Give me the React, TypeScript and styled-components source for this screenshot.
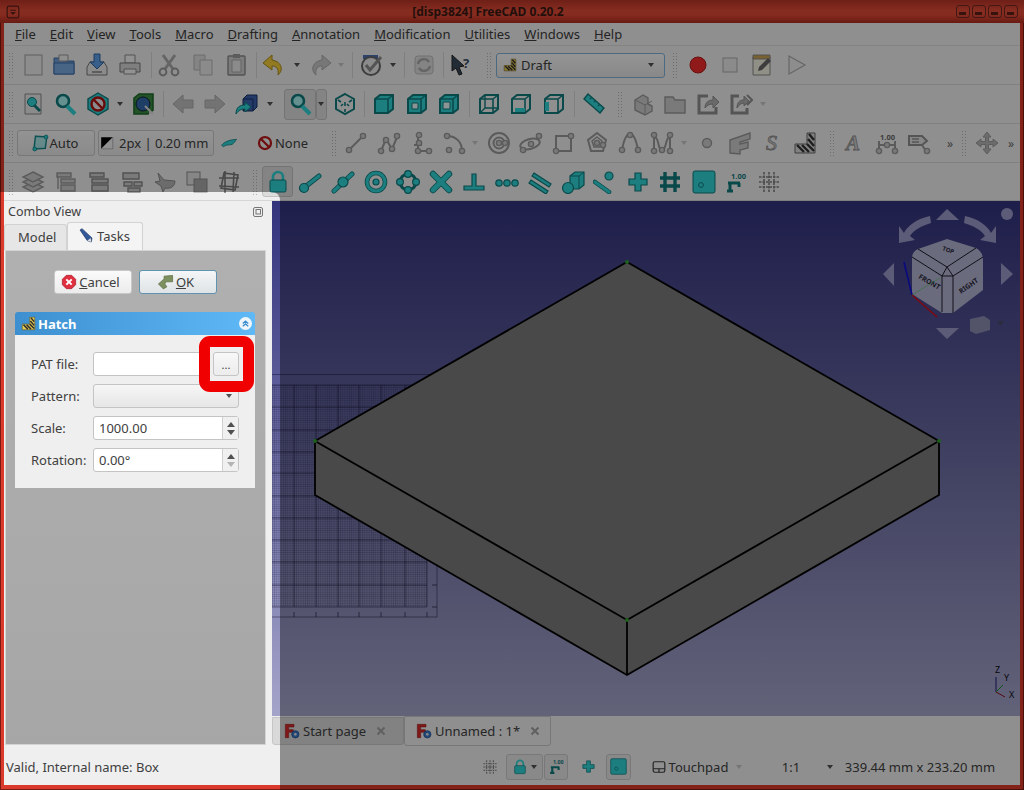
import type { ReactNode } from 'react';
import styled, { createGlobalStyle } from 'styled-components';

const GlobalStyle = createGlobalStyle`
  html, body {
    margin: 0;
    width: 1024px;
    height: 790px;
    overflow: hidden;
    background: #efefef;
  }
  body {
    font-family: "Noto Sans", "Open Sans", sans-serif;
    font-size: 13px;
    color: #404040;
  }
`;

const Window = styled.div`
  position: relative;
  width: 1024px;
  height: 790px;
  overflow: hidden;
  display: flex;
  flex-direction: column;
  background: #d93a2b;
  box-shadow: inset 0 0 0 1px #7a1a12;
`;

const Spotlight = styled.div`
  position: absolute;
  left: 0;
  top: 192px;
  width: 280px;
  height: 598px;
  border-top-right-radius: 8px;
  box-shadow: 0 0 0 1300px rgba(0, 0, 0, 0.4);
  pointer-events: none;
`;

const TitleBar = styled.div`
  height: 23px;
  flex: none;
  display: flex;
  align-items: center;
  justify-content: space-between;
  padding: 0 6px;
  background: linear-gradient(#b83527 0%, #e04a36 45%, #e04835 65%, #ad2d20 100%);
`;

const TitleText = styled.div`
  font-size: 12px;
  font-weight: 700;
  color: #3a1a14;
`;

const WinButtons = styled.div`
  display: flex;
  gap: 2px;
`;

const WinButton = styled.div`
  width: 14px;
  height: 13px;
  border: 1px solid #6d2a22;
  border-radius: 3px;
  display: flex;
  align-items: flex-end;
  justify-content: center;
  padding-bottom: 2px;
  box-sizing: border-box;
  &::after {
    content: '';
    width: 7px;
    height: 3px;
    background: #5a2018;
  }
`;

const Shell = styled.div`
  flex: 1;
  min-height: 0;
  margin: 0 4px 5px;
  display: flex;
  flex-direction: column;
  background: #efefef;
`;

const MenuBar = styled.div`
  height: 23px;
  flex: none;
  display: flex;
  align-items: center;
  gap: 14px;
  padding-left: 11px;
  border-bottom: 1px solid #dcdcdc;
  box-sizing: border-box;
`;

const MenuItem = styled.span`
  font-size: 13px;
  color: #3c3c3c;
`;

const ToolRow = styled.div<{ $h: number }>`
  height: ${(p) => p.$h}px;
  flex: none;
  display: flex;
  align-items: center;
  border-bottom: 1px solid #d6d6d6;
  box-sizing: border-box;
`;

const Slot = styled.div<{ $w: number; $ml: number }>`
  width: ${(p) => p.$w}px;
  margin-left: ${(p) => p.$ml}px;
  flex: none;
  display: flex;
  align-items: center;
  justify-content: center;
  color: #404040;
`;

const Sep = styled.div`
  width: 1px;
  height: 26px;
  background: #d4d4d4;
`;

const Grip = styled.div`
  width: 6px;
  height: 26px;
  background-image: radial-gradient(circle, #b5b5b5 0.8px, transparent 1px);
  background-size: 3px 3px;
`;

const Drop = styled.div<{ $off?: boolean }>`
  width: 0;
  height: 0;
  border-left: 3.5px solid transparent;
  border-right: 3.5px solid transparent;
  border-top: 4px solid ${(p) => (p.$off ? '#c4c4c4' : '#505050')};
`;

const Combo = styled.div`
  width: 100%;
  height: 25px;
  box-sizing: border-box;
  display: flex;
  align-items: center;
  gap: 4px;
  padding: 0 6px;
  border: 1px solid #7fb0d4;
  border-radius: 3px;
  background: linear-gradient(#f7f7f7, #e4e4e4);
  font-size: 13px;
  & > :last-child {
    margin-left: auto;
    margin-right: 4px;
  }
`;

const FlatButton = styled.div`
  width: 100%;
  height: 26px;
  box-sizing: border-box;
  display: flex;
  align-items: center;
  justify-content: center;
  gap: 1px;
  padding-right: 3px;
  border: 1px solid #c6c6c6;
  border-radius: 3px;
  background: linear-gradient(#f5f5f5, #e7e7e7);
  font-size: 13px;
  white-space: nowrap;
`;

const Pressed = styled.div`
  width: 100%;
  height: 31px;
  box-sizing: border-box;
  display: flex;
  align-items: center;
  justify-content: center;
  border: 1px solid #c2c2c2;
  border-radius: 3px;
  background: #dcdcdc;
`;

const PlainLabel = styled.div`
  display: flex;
  align-items: center;
  gap: 1px;
  font-size: 13px;
  white-space: nowrap;
`;

const More = styled.span`
  font-size: 12px;
  color: #666;
`;

const Main = styled.div`
  height: 549px;
  flex: none;
  display: flex;
`;

const Dock = styled.div`
  width: 268px;
  flex: none;
  display: flex;
  flex-direction: column;
  background: #efefef;
`;

const DockHead = styled.div`
  height: 21px;
  flex: none;
  display: flex;
  align-items: center;
  justify-content: space-between;
  padding: 0 8px 0 4px;
  font-size: 12.5px;
`;

const TabRow = styled.div`
  height: 28px;
  flex: none;
  display: flex;
  align-items: flex-end;
`;

const DockTab = styled.div<{ $on?: boolean }>`
  box-sizing: border-box;
  height: ${(p) => (p.$on ? 28 : 26)}px;
  width: ${(p) => (p.$on ? 76 : 63)}px;
  padding: 0 0 2px ${(p) => (p.$on ? 10 : 13)}px;
  display: flex;
  align-items: center;
  gap: 3px;
  background: ${(p) => (p.$on ? '#f4f4f4' : '#e6e6e6')};
  border: 1px solid #d2d2d2;
  border-bottom: none;
  border-radius: 3px 3px 0 0;
  font-size: 13px;
`;

const TaskPanel = styled.div`
  height: 495px;
  width: 261px;
  margin-left: 1px;
  flex: none;
  box-sizing: border-box;
  border: 1px solid #d4d4d4;
  background: linear-gradient(#b0b0b0, #a6a6a6);
  padding-top: 19px;
`;

const DialogButtons = styled.div`
  display: flex;
  justify-content: center;
  gap: 7px;
  margin-left: -1px;
`;

const DialogButton = styled.div<{ $focus?: boolean }>`
  width: 78px;
  height: 24px;
  box-sizing: border-box;
  display: flex;
  align-items: center;
  justify-content: center;
  gap: 2px;
  padding-right: 4px;
  font-size: 13px;
  border: 1px solid ${(p) => (p.$focus ? '#5f93b0' : '#c8c8c8')};
  border-radius: 3px;
  background: ${(p) => (p.$focus ? 'linear-gradient(#f4f6f7, #dfe3e5)' : 'linear-gradient(#fafafa, #ececec)')};
`;

const Section = styled.div`
  margin: 18px 10px 0 9px;
`;

const SectionHead = styled.div`
  height: 23px;
  display: flex;
  align-items: center;
  gap: 2px;
  padding: 0 3px 0 6px;
  border-radius: 3px 3px 0 0;
  background: linear-gradient(90deg, #3d8fcf, #5fb9f6);
  color: #fff;
  font-weight: 700;
  font-size: 13px;
`;

const Collapse = styled.div`
  margin-left: auto;
  width: 13px;
  height: 13px;
  border-radius: 50%;
  background: #eef6fb;
  display: flex;
  align-items: center;
  justify-content: center;
`;

const SectionBody = styled.div`
  position: relative;
  height: 153px;
  box-sizing: border-box;
  padding: 17px 16px 0;
  background: #efefef;
  display: grid;
  grid-template-columns: 62px 146px;
  grid-auto-rows: 24px;
  row-gap: 8px;
  align-items: center;
  font-size: 13px;
`;

const FieldRow = styled.div`
  display: flex;
  height: 24px;
  gap: 3px;
`;

const TextField = styled.div`
  flex: 1;
  box-sizing: border-box;
  height: 24px;
  display: flex;
  align-items: center;
  padding-left: 5px;
  background: #fff;
  border: 1px solid #c4c4c4;
  border-radius: 3px;
`;

const Browse = styled.div`
  width: 26px;
  height: 24px;
  box-sizing: border-box;
  display: flex;
  align-items: flex-end;
  justify-content: center;
  padding-bottom: 4px;
  line-height: 12px;
  font-size: 11px;
  border: 1px solid #c4c4c4;
  border-radius: 3px;
  background: linear-gradient(#f8f8f8, #ececec);
`;

const SelectField = styled.div`
  box-sizing: border-box;
  height: 24px;
  display: flex;
  align-items: center;
  justify-content: flex-end;
  padding-right: 6px;
  border: 1px solid #c4c4c4;
  border-radius: 3px;
  background: linear-gradient(#f6f6f6, #e6e6e6);
`;

const SpinField = styled.div`
  box-sizing: border-box;
  height: 24px;
  display: flex;
  align-items: center;
  padding-left: 5px;
  background: #fff;
  border: 1px solid #c4c4c4;
  border-radius: 3px;
`;

const SpinArrows = styled.div`
  margin-left: auto;
  width: 15px;
  height: 100%;
  display: flex;
  flex-direction: column;
  align-items: center;
  justify-content: center;
  gap: 3px;
  border-left: 1px solid #d0d0d0;
  background: #f0f0f0;
`;

const SpinUp = styled.div`
  width: 0;
  height: 0;
  border-left: 4px solid transparent;
  border-right: 4px solid transparent;
  border-bottom: 5px solid #505050;
`;

const SpinDown = styled.div<{ $off?: boolean }>`
  width: 0;
  height: 0;
  border-left: 4px solid transparent;
  border-right: 4px solid transparent;
  border-top: 5px solid ${(p) => (p.$off ? '#b4b4b4' : '#505050')};
`;

const RedRing = styled.div`
  position: absolute;
  left: 184px;
  top: 1px;
  width: 55px;
  height: 56px;
  box-sizing: border-box;
  border: 11px solid #f00000;
  border-radius: 11px;
`;

const Center = styled.div`
  flex: 1;
  min-width: 0;
  display: flex;
  flex-direction: column;
`;

const ViewPort = styled.div`
  height: 515px;
  flex: none;
  background: linear-gradient(#33337d, #a4a4ca);
  & > svg {
    display: block;
  }
`;

const DocTabs = styled.div`
  height: 34px;
  flex: none;
  display: flex;
  align-items: flex-start;
`;

const DocTab = styled.div<{ $on?: boolean }>`
  box-sizing: border-box;
  width: ${(p) => (p.$on ? 147 : 132)}px;
  height: ${(p) => (p.$on ? 30 : 28)}px;
  margin-top: ${(p) => (p.$on ? 0 : 1)}px;
  display: flex;
  align-items: center;
  gap: 3px;
  padding-left: 11px;
  font-size: 13px;
  background: ${(p) => (p.$on ? '#efefef' : '#d9d9d9')};
  border: 1px solid #c6c6c6;
  border-radius: 0 0 3px 3px;
`;

const CloseMark = styled.span<{ $ml: number }>`
  margin-left: ${(p) => p.$ml}px;
  display: flex;
`;

const StatusBar = styled.div`
  flex: 1;
  min-height: 0;
  display: flex;
  align-items: center;
  padding: 0 0 2px 2px;
  font-size: 13px;
`;

const StatusText = styled.div`
  width: 470px;
`;

const StatusItem = styled.div<{ $w: number; $ml: number; $box?: boolean }>`
  width: ${(p) => p.$w}px;
  margin-left: ${(p) => p.$ml}px;
  height: 26px;
  flex: none;
  box-sizing: border-box;
  display: flex;
  align-items: center;
  justify-content: center;
  gap: 3px;
  white-space: nowrap;
  ${(p) => p.$box && 'border: 1px solid #c8c8c8; border-radius: 3px; background: #e4e4e4;'}
`;

const Ico = styled.svg<{ $s: number }>`
  width: ${(p) => p.$s}px;
  height: ${(p) => p.$s}px;
  flex: none;
`;

const T = '#2fd2d4';
const TD = '#127a7c';
const GF = '#cccccc';
const GS = '#989898';

const grey = { fill: GF, stroke: GS, strokeWidth: 1.4 };
const teal = { fill: T, stroke: TD, strokeWidth: 1.2 };
const wire = { fill: 'none', stroke: GS, strokeWidth: 2 };

const node = (x: number, y: number, k: number) => <circle key={k} cx={x} cy={y} r={2.6} {...grey} />;
const nodes = (pts: number[][]) => pts.map((p, i) => node(p[0], p[1], i));

const cubeBase = 'M3 7l5-4h13v14l-5 4H3z';
const cube = (filled: boolean, inner: ReactNode) => (
  <>
    <path d={cubeBase} fill={filled ? T : 'none'} stroke={TD} strokeWidth={2} />
    <path d="M3 7h13v14M16 7l5-4" fill="none" stroke={TD} strokeWidth={1.6} />
    {inner}
  </>
);

const icons: Record<string, ReactNode> = {
  menu: (
    <>
      <rect x="2" y="2" width="20" height="20" rx="3" fill="none" stroke="#5a2018" strokeWidth="2" />
      <path d="M7 8h10v2H7zM7 12h10l-5 5z" fill="#5a2018" />
    </>
  ),
  new: <rect x="4" y="2" width="17" height="20" fill="#ececec" stroke="#aaa" strokeWidth="1.2" />,
  open: (
    <>
      <path d="M2 5h9l2 3h9v13H2z" fill="#6f9fd8" stroke="#3c6aa5" />
      <path d="M7 2h9v6H7z" fill="#eee" stroke="#999" />
      <path d="M2 10h20v11H2z" fill="#7aa8e0" stroke="#3c6aa5" />
    </>
  ),
  save: (
    <>
      <path d="M2 14l3-5h14l3 5v8H2z" fill="#e8e8e8" stroke="#777" />
      <path d="M9 1h6v8h4l-7 7-7-7h4z" fill="#5c9ee6" stroke="#2f629c" />
      <path d="M7 18h10v2H7z" fill="#999" />
    </>
  ),
  print: (
    <>
      <path d="M7 2h10v8H7z" fill="#f4f4f4" stroke="#888" />
      <path d="M2 10h20v9H2z" fill="#d4d4d4" stroke="#777" />
      <path d="M6 16h12v5H6z" fill="#f4f4f4" stroke="#888" />
    </>
  ),
  cut: (
    <>
      <path d="M6 2l10 14M18 2L8 16" stroke="#a8a8a8" strokeWidth="3" fill="none" />
      <circle cx="6" cy="19" r="3.4" fill="none" stroke="#999" strokeWidth="2" />
      <circle cx="18" cy="19" r="3.4" fill="none" stroke="#999" strokeWidth="2" />
    </>
  ),
  copy: (
    <>
      <path d="M3 2h11v15H3z" fill="#dcdcdc" stroke="#b4b4b4" />
      <path d="M9 7h12v15H9z" fill="#e8e8e8" stroke="#b4b4b4" />
    </>
  ),
  paste: (
    <>
      <rect x="4" y="3" width="17" height="19" rx="1" fill="#cfcfcf" stroke="#8a8a8a" strokeWidth="1.4" />
      <path d="M8 7h9v12H8z" fill="#e8e8e8" stroke="#aaa" />
      <path d="M9 1h7v4H9z" fill="#999" />
    </>
  ),
  undo: <path d="M11 2L2 10l9 7v-4c4 0 7 2 6 9 5-4 5-13-6-15z" fill="#f2cc3a" stroke="#a88a1a" />,
  redo: <path d="M13 2l9 8-9 7v-4c-4 0-7 2-6 9-5-4-5-13 6-15z" fill="#c6c6c6" stroke="#aaa" />,
  macro: (
    <>
      <path d="M3 2h15v4H3z" fill="#4a6fb0" />
      <circle cx="11" cy="13" r="9" fill="#e8e8e8" stroke="#666" strokeWidth="2" />
      <path d="M6 12l4 5 11-13" fill="none" stroke="#8a8a8a" strokeWidth="3" />
    </>
  ),
  reload: (
    <>
      <rect x="3" y="3" width="18" height="18" rx="3" fill="#dcdcdc" stroke="#bbb" />
      <path d="M6 11a6 6 0 0 1 11-2M18 13a6 6 0 0 1-11 2" fill="none" stroke="#a8a8a8" strokeWidth="2.4" />
    </>
  ),
  help: (
    <>
      <path d="M2 2l12 11-5 1 3 7-3 1-3-7-4 3z" fill="#384a5c" stroke="#222" />
      <text x="13" y="15" fontSize="13" fontWeight="700" fill="#3a4e62" fontFamily="Noto Sans">?</text>
    </>
  ),
  record: <circle cx="12" cy="12" r="8" fill="#f02a2a" stroke="#b01a1a" />,
  stop: <rect x="5" y="5" width="14" height="14" fill="#e8e8e8" stroke="#aaa" />,
  edit: (
    <>
      <path d="M3 4h17v18H3z" fill="#f0f0e0" stroke="#888" />
      <path d="M3 2h17v4H3z" fill="#c8a050" stroke="#888" />
      <path d="M8 18l1-4 9-9 3 3-9 9z" fill="#666" />
    </>
  ),
  play: <path d="M5 3l16 9-16 9z" fill="#ececec" stroke="#aaa" strokeWidth="1.2" />,
  fitall: (
    <>
      <path d="M4 2h16v20H4z" fill="#e8e8e8" stroke="#888" />
      <circle cx="11" cy="10" r="4.5" fill={T} stroke={TD} />
      <path d="M13 13l6 6" stroke={TD} strokeWidth="3" />
    </>
  ),
  fitsel: (
    <>
      <circle cx="10" cy="9" r="6" fill="#a8f0f0" stroke={TD} strokeWidth="2.6" />
      <path d="M14 14l8 8" stroke={T} strokeWidth="4" />
    </>
  ),
  draw: (
    <>
      <path d="M12 1l10 6v10l-10 6-10-6V7z" fill={T} stroke={TD} strokeWidth="1.4" />
      <circle cx="12" cy="12" r="6.5" fill="#e8e8e8" stroke="#b01212" strokeWidth="2.4" />
      <path d="M8 8l8 8" stroke="#b01212" strokeWidth="2.4" />
    </>
  ),
  bbox: (
    <>
      <path d="M3 6l5-4h14v16l-5 4H3z" fill="#3a8a40" stroke="#1f6a28" strokeWidth="1.6" />
      <circle cx="12" cy="12" r="7" fill="#3268a8" stroke="#123" />
      <path d="M14 14l7 7-3 0" stroke="#ddd" strokeWidth="2" fill="none" />
    </>
  ),
  back: <path d="M2 12l10-9v5h10v8H12v5z" fill="#c0c0c0" stroke="#aaa" />,
  fwd: <path d="M22 12L12 3v5H2v8h10v5z" fill="#c0c0c0" stroke="#aaa" />,
  sync: (
    <>
      <path d="M8 7l4-4h10v12l-4 4H8z" fill="#3d62b0" stroke="#18305e" />
      <path d="M8 7h10v12" fill="none" stroke="#18305e" />
      <path d="M1 22c0-7 4-9 9-9v-3l6 5-6 5v-3c-4 0-6 1-9 5z" fill={T} stroke={TD} />
    </>
  ),
  zoom: (
    <>
      <circle cx="10" cy="9" r="6" fill="#a8f0f0" stroke={TD} strokeWidth="2.6" />
      <path d="M14 14l8 8" stroke={T} strokeWidth="4" />
    </>
  ),
  iso: (
    <>
      <path d="M12 2l9 5v10l-9 5-9-5V7z" fill="none" stroke={TD} strokeWidth="2" />
      <path d="M12 10v4M8 14l2-2M16 14l-2-2M5 8l3 2M19 8l-3 2M12 17v3" stroke={TD} strokeWidth="1.6" />
    </>
  ),
  front: cube(true, null),
  top: cube(true, <path d="M7 11h6v6H7z" fill="#eaf8f8" stroke={TD} />),
  right: cube(true, <path d="M6 10h7v7H6z" fill="#eaf8f8" stroke={TD} />),
  rear: cube(false, <path d="M8 3v13h13M3 21l5-5" fill="none" stroke={TD} strokeWidth="1.4" />),
  bottom: cube(false, <path d="M6 18h10" stroke={T} strokeWidth="4" />),
  left: cube(false, <path d="M5 10v9" stroke={T} strokeWidth="4" />),
  measure: <path d="M6 2l16 14-4 5L2 7zM10 5l-2 2M14 8l-2 2M18 12l-2 2" fill={T} stroke={TD} strokeWidth="1.4" />,
  part: (
    <>
      <path d="M4 8l8-5 5 3v6l4 2v5l-7 4-10-5z" {...grey} />
      <path d="M4 8l10 5v9M14 13l7-4" fill="none" stroke={GS} />
    </>
  ),
  folder: <path d="M2 5h8l2 3h10v13H2z" {...grey} />,
  link: (
    <>
      <path d="M12 4H3v17h17v-6" fill="none" stroke="#8e8e8e" strokeWidth="3" />
      <path d="M9 16c0-5 3-8 8-8V4l6 6-6 6v-4c-3 0-6 1-8 4z" fill="#b0b0b0" stroke="#8e8e8e" />
    </>
  ),
  link2: (
    <>
      <path d="M10 4H3v17h15v-5" fill="none" stroke="#8e8e8e" strokeWidth="3" />
      <path d="M8 16c0-5 2-8 7-8V4l5 5-5 5v-3c-3 0-5 2-7 5z" fill="#b0b0b0" stroke="#8e8e8e" />
      <path d="M18 3l5 5-5 5" fill="none" stroke="#8e8e8e" strokeWidth="2" />
    </>
  ),
  autoWp: (
    <>
      <path d="M6 3l15 1-2 15-15 1z" fill="none" stroke={TD} strokeWidth="2" />
      <path d="M6 3l15 1-2 15-15 1z" fill={T} fillOpacity="0.35" />
      <circle cx="5" cy="20" r="2.6" fill={T} stroke={TD} />
      <circle cx="20" cy="4" r="2.6" fill={T} stroke={TD} />
    </>
  ),
  lineColor: (
    <>
      <path d="M2 2h20L2 22z" fill="#000" />
      <path d="M22 2v20H2z" fill="#f0f0f0" stroke="#888" />
    </>
  ),
  arrow: <path d="M2 15c5-6 12-7 20-8-2 3-3 5-6 7-4 1-9 0-11 3z" fill={T} stroke={TD} />,
  none: (
    <>
      <circle cx="12" cy="12" r="8" fill="none" stroke="#b81818" strokeWidth="3" />
      <path d="M6 6l12 12" stroke="#b81818" strokeWidth="3" />
    </>
  ),
  line: (
    <>
      <path d="M5 19L19 5" {...wire} />
      {nodes([[5, 19], [19, 5]])}
    </>
  ),
  wire: (
    <>
      <path d="M4 20L9 8l6 10 6-14" {...wire} />
      {nodes([[4, 20], [9, 9], [15, 18], [20, 5]])}
    </>
  ),
  fillet: (
    <>
      <path d="M8 2v18h12M4 14h8" {...wire} />
      {nodes([[9, 4], [9, 12], [8, 20], [19, 20]])}
    </>
  ),
  arc: (
    <>
      <path d="M4 5c9 0 15 6 15 15" {...wire} />
      {nodes([[4, 5], [19, 20], [6, 19]])}
    </>
  ),
  circle: (
    <>
      <circle cx="12" cy="12" r="10" fill="none" stroke={GS} strokeWidth="2" />
      <circle cx="12" cy="12" r="5.5" fill="none" stroke={GS} strokeWidth="2" />
      <circle cx="12" cy="12" r="2.6" {...grey} />
      <circle cx="18" cy="12" r="2.6" {...grey} />
    </>
  ),
  ellipse: (
    <>
      <ellipse cx="11" cy="13" rx="10" ry="5" transform="rotate(-15 11 13)" fill="none" stroke={GS} strokeWidth="2" />
      {nodes([[4, 19], [20, 5], [12, 13]])}
    </>
  ),
  rect: (
    <>
      <rect x="4" y="5" width="15" height="15" fill="none" stroke={GS} strokeWidth="2" />
      {nodes([[4, 20], [19, 5]])}
    </>
  ),
  polygon: (
    <>
      <path d="M12 2l9 7-3 11H6L3 9z" fill="none" stroke={GS} strokeWidth="2" />
      <path d="M12 6l5 4-2 6H9l-2-6z" fill="none" stroke={GS} strokeWidth="1.5" />
      {nodes([[18, 14], [12, 12]])}
    </>
  ),
  bspline: (
    <>
      <path d="M4 19C6 8 9 3 12 3s6 5 8 16" {...wire} />
      {nodes([[4, 19], [12, 4], [20, 19]])}
    </>
  ),
  cubic: (
    <>
      <path d="M4 4v15M20 4v15M4 6c6 0 3 13 8 13s3-13 8-13" {...wire} />
      {nodes([[4, 4], [20, 4], [4, 20], [20, 20], [12, 19]])}
    </>
  ),
  point: <circle cx="12" cy="12" r="4.5" {...grey} />,
  face: <path d="M2 9L22 2v6l-10 3v2l8-2v6l-8 2v4L2 22z" {...grey} />,
  sstr: (
    <text x="5" y="19" fontSize="22" fontStyle="italic" fontFamily="Liberation Serif" fill={GF} stroke="#8c8c8c" strokeWidth="0.8">S</text>
  ),
  hatch: (
    <>
      <path d="M14 2h8v20H2v-9h12z" fill="#d8d8d8" stroke="#666" />
      <path d="M16 3l5 6M15 8l6 7M4 14l7 7M9 14l7 7M14 13l7 7" stroke="#333" strokeWidth="2.4" />
    </>
  ),
  hatchYellow: (
    <>
      <path d="M14 2h8v20H2v-9h12z" fill="#e8cc50" stroke="#6a5a20" />
      <path d="M16 3l5 6M15 8l6 7M4 14l7 7M9 14l7 7M14 13l7 7" stroke="#2c2c2c" strokeWidth="2.4" />
    </>
  ),
  textA: (
    <text x="4" y="19" fontSize="21" fontStyle="italic" fontWeight="700" fontFamily="Liberation Serif" fill={GF} stroke="#8c8c8c" strokeWidth="0.8">A</text>
  ),
  dimen: (
    <>
      <text x="5" y="8.500" fontSize="7.500" fontWeight="700" fontFamily="Noto Sans" fill="#666">1.00</text>
      <path d="M4 10v11M20 10v11M4 14h16" {...wire} />
      {nodes([[4, 20], [20, 20], [12, 14]])}
    </>
  ),
  label: (
    <>
      <path d="M2 5h13l5 5-5 4H2z" fill="#e0e0e0" stroke="#8e8e8e" strokeWidth="2" />
      <path d="M5 8h7M5 11h7" stroke="#8e8e8e" strokeWidth="1.4" />
      <path d="M15 14l4 6" {...wire} />
      {nodes([[20, 20]])}
    </>
  ),
  move: (
    <path d="M12 1l4 5h-2.5v4.5H18V8l5 4-5 4v-2.500h-4.500V18H16l-4 5-4-5h2.500v-4.500H6V16l-5-4 5-4v2.500h4.500V6H8z" fill="#b4b4b4" stroke="#999" />
  ),
  layers: (
    <>
      <path d="M12 12l10 5-10 5-10-5z" {...grey} />
      <path d="M12 7l10 5-10 5-10-5z" {...grey} />
      <path d="M12 2l10 5-10 5L2 7z" {...grey} />
    </>
  ),
  tree1: <path d="M3 3h14v4H3zM7 9h14v4H7zM7 15h14v6H7zM4 7v12" {...grey} />,
  tree2: <path d="M3 3h14v4H3zM5 9h16v4H5zM5 15h16v6H5z" fill={GF} stroke="#888" strokeWidth="1.4" />,
  tree3: <path d="M3 3h16v6H3zM4 12h8v4H4zM14 12h8v4h-8zM8 18h12v4H8z" fill={GF} stroke="#888" strokeWidth="1.4" />,
  bird: <path d="M5 3l6 7 11 1c0 6-5 8-10 7l-2 4-2-6-6-4 5-1z" fill="#b4b4b4" stroke="#8a8a8a" />,
  stack: (
    <>
      <rect x="2" y="2" width="13" height="13" fill="#e0e0e0" stroke="#8a8a8a" />
      <rect x="9" y="9" width="13" height="13" fill="#a8a8a8" stroke="#8a8a8a" />
    </>
  ),
  wpClone: <path d="M7 3l14 2-3 15L4 18zM2 8h20M8 1v22M2 16l20 1M17 2l-1 20" fill="none" stroke="#7a7a7a" strokeWidth="1.6" />,
  lock: (
    <>
      <path d="M7 11V7a5 5 0 0 1 10 0v4" fill="none" stroke={T} strokeWidth="2.6" />
      <rect x="4" y="10" width="16" height="12" rx="1.500" fill={T} stroke={TD} />
    </>
  ),
  endpoint: (
    <>
      <path d="M7 17L21 6" stroke={TD} strokeWidth="5" strokeLinecap="round" />
      <path d="M7 17L21 6" stroke={T} strokeWidth="3.4" strokeLinecap="round" />
      <circle cx="6" cy="18" r="4.5" {...teal} />
    </>
  ),
  midpoint: (
    <>
      <path d="M3 21L21 4" stroke={TD} strokeWidth="5" strokeLinecap="round" />
      <path d="M3 21L21 4" stroke={T} strokeWidth="3.4" strokeLinecap="round" />
      <circle cx="12" cy="12" r="5" {...teal} />
    </>
  ),
  center: (
    <>
      <circle cx="12" cy="12" r="9" fill="none" stroke={TD} strokeWidth="4.6" />
      <circle cx="12" cy="12" r="9" fill="none" stroke={T} strokeWidth="3" />
      <circle cx="12" cy="12" r="3" {...teal} />
    </>
  ),
  angle: (
    <>
      <circle cx="12" cy="12" r="8" fill="none" stroke={TD} strokeWidth="3" />
      {[[12, 4], [20, 12], [12, 20], [4, 12]].map((p) => (
        <circle key={p.join()} cx={p[0]} cy={p[1]} r={3.4} {...teal} />
      ))}
    </>
  ),
  intersect: (
    <>
      <path d="M4 4l16 16M20 4L4 20" stroke={TD} strokeWidth="6.4" strokeLinecap="round" />
      <path d="M4 4l16 16M20 4L4 20" stroke={T} strokeWidth="4.6" strokeLinecap="round" />
    </>
  ),
  perp: <path d="M10 4h4v12h8v4H2v-4h8z" {...teal} />,
  ext: (
    <>
      <circle cx="4" cy="13" r="3.2" {...teal} />
      <circle cx="12" cy="13" r="3.2" {...teal} />
      <circle cx="20" cy="13" r="3.2" {...teal} />
    </>
  ),
  parallel: <path d="M6 3l17 11-2 3L4 6zM3 10l17 11-2 3L1 13z" {...teal} />,
  special: (
    <>
      <path d="M9 6l5-4h9v13l-5 4H9z" {...teal} />
      <path d="M9 6h9v13M18 6l5-4" fill="none" stroke={TD} />
      <circle cx="7" cy="18" r="5.5" {...teal} />
    </>
  ),
  near: (
    <>
      <path d="M2 12l14 10" stroke={TD} strokeWidth="4.6" strokeLinecap="round" />
      <path d="M2 12l14 10" stroke={T} strokeWidth="3" strokeLinecap="round" />
      <circle cx="16" cy="6" r="4" {...teal} />
    </>
  ),
  ortho: <path d="M9 3h6v6h6v6h-6v6H9v-6H3V9h6z" {...teal} />,
  grid: <path d="M7 2v20M17 2v20M2 8h20M2 16h20" stroke={TD} strokeWidth="3.4" fill="none" />,
  wp: (
    <>
      <rect x="1" y="1" width="22" height="22" rx="2" fill={T} stroke={TD} />
      <circle cx="9" cy="15" r="2.4" fill="none" stroke={TD} />
    </>
  ),
  wpdim: (
    <>
      <text x="7" y="8.500" fontSize="7.500" fontWeight="700" fontFamily="Noto Sans" fill={TD}>1.00</text>
      <path d="M4 13h12M6 13v8M3 21h6M15 13v4" stroke={TD} strokeWidth="3" fill="none" />
    </>
  ),
  gridOff: <path d="M7 2v20M12 2v20M17 2v20M2 7h20M2 12h20M2 17h20" stroke="#7e7e7e" strokeWidth="1.6" strokeDasharray="2.500 1" fill="none" />,
  fcad: (
    <>
      <path d="M2 2h13v4H7v4h7v4H7v8H2z" fill="#d42a2a" stroke="#8c1414" strokeWidth="0.8" />
      <circle cx="17" cy="17" r="5.5" fill="#3a78c8" stroke="#1f4a88" />
      <circle cx="17" cy="17" r="2" fill="#e0e0e0" />
    </>
  ),
  close: <path d="M5 5l14 14M19 5L5 19" stroke="#a0a0a0" strokeWidth="4" />,
  pen: (
    <>
      <path d="M3 3l3-2 15 14-1 6-6-2z" fill="#33589a" stroke="#1c3566" />
      <path d="M14 19l6 2-1-6z" fill="#ddd" />
    </>
  ),
  cancel: (
    <>
      <path d="M8 2h8l6 6v8l-6 6H8l-6-6V8z" fill="#e03040" stroke="#a01824" />
      <path d="M8 8l8 8M16 8l-8 8" stroke="#fff" strokeWidth="3" />
    </>
  ),
  ok: <path d="M2 14l8-7V3l12-1v9H13l-2 3 3 4-5 3z" fill="#7d9060" stroke="#5a6a40" />,
  floatDock: (
    <>
      <rect x="3" y="3" width="18" height="18" rx="3" fill="none" stroke="#777" strokeWidth="2" />
      <rect x="8" y="7" width="9" height="9" fill="none" stroke="#777" strokeWidth="2" />
    </>
  ),
  collapse: <path d="M6 12l6-5 6 5M6 18l6-5 6 5" fill="none" stroke="#3d8fcf" strokeWidth="3" />,
  touchpad: (
    <>
      <rect x="2" y="3" width="20" height="18" rx="3" fill="none" stroke="#3a3a3a" strokeWidth="2" />
      <path d="M2 15h20M12 15v6" stroke="#3a3a3a" strokeWidth="2" />
    </>
  ),
};

function Icon({ name, size = 24 }: { name: string; size?: number }) {
  return (
    <Ico $s={size} viewBox="0 0 24 24">
      {icons[name]}
    </Ico>
  );
}

type BarItem = [string, number, number?, ReactNode?];

function Bar({ items, h }: { items: BarItem[]; h: number }) {
  let x = 4;
  return (
    <ToolRow $h={h}>
      {items.map(([name, c, w = 24, custom], i) => {
        const ml = c - w / 2 - x;
        x = c + w / 2;
        return (
          <Slot key={i} $w={w} $ml={ml}>
            {custom ??
              (name === 'sep' ? (
                <Sep />
              ) : name === 'grip' ? (
                <Grip />
              ) : name === 'dd' ? (
                <Drop />
              ) : name === 'ddoff' ? (
                <Drop $off />
              ) : (
                <Icon name={name} />
              ))}
          </Slot>
        );
      })}
    </ToolRow>
  );
}

const dd = (c: number): BarItem => ['dd', c, 8];
const ddoff = (c: number): BarItem => ['ddoff', c, 8];
const sep = (c: number): BarItem => ['sep', c, 1];
const grip = (c: number): BarItem => ['grip', c, 6];

const row1: BarItem[] = [
  grip(11), ['new', 33], ['open', 64], ['save', 97], ['print', 130], sep(151), ['cut', 169], ['copy', 203], ['paste', 236],
  sep(256), ['undo', 273], dd(297), ['redo', 321], ddoff(341), sep(352), ['macro', 372], dd(393), sep(404), ['reload', 424],
  sep(443), ['help', 462], grip(489),
  ['combo', 580.5, 169, <Combo><Icon name="hatchYellow" size={14} /><span>Draft</span><Drop /></Combo>],
  grip(675), ['record', 698], ['stop', 730], ['edit', 762], ['play', 796],
];

const row2: BarItem[] = [
  grip(11), ['fitall', 33], ['fitsel', 65], ['draw', 98], dd(120), ['bbox', 143], sep(163), ['back', 183], ['fwd', 215],
  ['sync', 247], dd(270), ['zoom', 300, 32, <Pressed><Icon name="zoom" /></Pressed>],
  ['zdd', 321, 11, <Pressed><Drop /></Pressed>], ['iso', 345], sep(364), ['front', 384], ['top', 417], ['right', 449], sep(469),
  ['rear', 489], ['bottom', 521], ['left', 554], sep(574), ['measure', 594], grip(620), ['part', 643], ['folder', 675],
  ['link', 708], ['link2', 741], ddoff(763),
];

const row3: BarItem[] = [
  grip(11),
  ['auto', 56, 78, <FlatButton><Icon name="autoWp" size={18} /><span>Auto</span></FlatButton>],
  ['lw', 155.500, 116, <FlatButton><Icon name="lineColor" size={14} />&nbsp;<span>2px | 0.20 mm</span></FlatButton>],
  ['arrow', 229, 20, <Icon name="arrow" size={18} />],
  ['none', 282, 56, <PlainLabel><Icon name="none" size={18} /><span>None</span></PlainLabel>],
  grip(334), ['line', 356], ['wire', 389], ['fillet', 422], ['arc', 455], ddoff(475), ['circle', 499], ['ellipse', 531],
  ['rect', 564], ['polygon', 597], ['bspline', 630], ['cubic', 662], ddoff(684), ['point', 707], ['face', 740], ['sstr', 773],
  ['hatch', 805], grip(832), ['textA', 854], ['dimen', 887], ['label', 919],
  ['m1', 950, 12, <More>»</More>], grip(964), ['move', 987], ['m2', 1011, 12, <More>»</More>],
];

const row4: BarItem[] = [
  grip(11), ['layers', 33], ['tree1', 66], ['tree2', 99], ['tree3', 132], ['bird', 165], ['stack', 197], ['wpClone', 229],
  grip(255), ['lock', 277.500, 31, <Pressed><Icon name="lock" /></Pressed>], ['endpoint', 310], ['midpoint', 343], ['center', 376],
  ['angle', 408], ['intersect', 441], ['perp', 474], ['ext', 507], ['parallel', 540], ['special', 573], ['near', 605],
  ['ortho', 638], ['grid', 670], ['wp', 704], ['wpdim', 736], ['gridOff', 769],
];

function SceneSvg() {
  return (
    <svg width="748" height="515" viewBox="272 201 748 515">
      <defs>
        <pattern id="fine" width="2.200" height="2.200" patternUnits="userSpaceOnUse" x="272" y="385">
          <path d="M0 0H2.200M0 0V2.200" stroke="#10102a" strokeOpacity="0.4" strokeWidth="0.7" fill="none" />
        </pattern>
      </defs>
      <rect x="272" y="385" width="155" height="222" fill="url(#fine)" />
      <path
        d="M272 374.500H437V617H272M294 385V607M316 385V607M338 385V607M359 385V607M381 385V607M405 385V607M427 385V607M272 385H427M272 407H427M272 430H427M272 452H427M272 473H427M272 496H427M272 518H427M272 540H427M272 562H427M272 585H427M272 607H427"
        stroke="#0c0c24"
        strokeOpacity="0.55"
        strokeWidth="0.8"
        fill="none"
      />
      <path d="M294 612V617M316 612V617M338 612V617M359 612V617M381 612V617M405 612V617M427 612V617M432 385H437M432 407H437M432 585H437M432 607H437" stroke="#0c0c24" strokeOpacity="0.6" fill="none" />

      <path d="M627 262L939 441V495L627 675L315 495V441Z" fill="#7b7b7b" />
      <path d="M315 441L627 262L939 441L627 620Z M315 441V495L627 675L939 495V441 M627 620V675" fill="none" stroke="#000" strokeWidth="1.800" />
      {[[627, 262], [939, 441], [315, 441], [627, 620]].map((p) => (
        <circle key={p.join()} cx={p[0]} cy={p[1]} r={2} fill="#2fa02f" />
      ))}

      <g fill="#9a9ac8">
        <path d="M947 209L936 220H959ZM936 328H959L947 339ZM894 263L883 274L894 286ZM1001 263L1013 274L1001 285Z" />
        <path d="M930 216C917 219 908 225 904 233L899 226L899 243L915 240L910 236C914 230 921 226 931 223Z" />
        <path d="M965 216C978 219 987 225 991 233L996 226L996 243L980 240L985 236C981 230 974 226 964 223Z" />
        <circle cx="1007" cy="214" r="6" />
      </g>
      <path d="M970 319L984 316L990 320V330L976 334L970 331Z" fill="#8a8ab0" />
      <path d="M997 321H1004L1000 326Z" fill="#4a4a68" />
      <path d="M947 239L976 248Q983 252 983 260V290L953 313H942L912 294V258Q912 252 918 249Z" fill="#b2b2d2" />
      <path d="M912 257L942 276M983 257L953 276M918 249L947 267L976 248M947 267L942 276H953Z M942 276V312M953 276V313" fill="none" stroke="#1a1a2a" strokeWidth="1" />
      <text x="0" y="0" fontSize="7" fontWeight="700" fontFamily="Noto Sans" fill="#2a2a3a" transform="translate(918 278) rotate(30)">FRONT</text>
      <text x="0" y="0" fontSize="7" fontWeight="700" fontFamily="Noto Sans" fill="#2a2a3a" transform="translate(961 294) rotate(-35)">RIGHT</text>
      <text x="0" y="0" fontSize="6" fontWeight="700" fontFamily="Noto Sans" fill="#2a2a3a" transform="translate(942 250) rotate(20)">TOP</text>
      <path d="M904 262L912 295" stroke="#1010d8" strokeWidth="1.600" />
      <path d="M912 295L937 317" stroke="#d01020" strokeWidth="1.600" />
      <path d="M912 295L940 278" stroke="#40c040" strokeOpacity="0.5" strokeWidth="1" />

      <path d="M996 692V677" stroke="#1a1a70" strokeWidth="1" />
      <path d="M996 692L1005 697" stroke="#901020" strokeWidth="1" />
      <path d="M996 692L1003 685" stroke="#209030" strokeWidth="1" />
      <g fontSize="9" fontFamily="Noto Sans" fill="#0c0c14">
        <text x="995" y="673">Z</text>
        <text x="1004" y="681">Y</text>
        <text x="1009" y="698">X</text>
      </g>
    </svg>
  );
}

function Labelled({ first, rest }: { first: string; rest: string }) {
  return (
    <span>
      <u>{first}</u>
      {rest}
    </span>
  );
}

const menus = ['File', 'Edit', 'View', 'Tools', 'Macro', 'Drafting', 'Annotation', 'Modification', 'Utilities', 'Windows', 'Help'];

export default function App() {
  return (
    <>
      <GlobalStyle />
      <Window>
        <TitleBar>
          <Icon name="menu" size={14} />
          <TitleText>[disp3824] FreeCAD 0.20.2</TitleText>
          <WinButtons>
            <WinButton />
            <WinButton />
            <WinButton />
            <WinButton />
          </WinButtons>
        </TitleBar>
        <Shell>
          <MenuBar>
            {menus.map((m) => (
              <MenuItem key={m}>
                <Labelled first={m[0]} rest={m.slice(1)} />
              </MenuItem>
            ))}
          </MenuBar>
          <Bar items={row1} h={39} />
          <Bar items={row2} h={39} />
          <Bar items={row3} h={39} />
          <Bar items={row4} h={38} />
          <Main>
            <Dock>
              <DockHead>
                <span>Combo View</span>
                <Icon name="floatDock" size={12} />
              </DockHead>
              <TabRow>
                <DockTab>Model</DockTab>
                <DockTab $on>
                  <Icon name="pen" size={16} />
                  Tasks
                </DockTab>
              </TabRow>
              <TaskPanel>
                <DialogButtons>
                  <DialogButton>
                    <Icon name="cancel" size={16} />
                    <Labelled first="C" rest="ancel" />
                  </DialogButton>
                  <DialogButton $focus>
                    <Icon name="ok" size={17} />
                    <Labelled first="O" rest="K" />
                  </DialogButton>
                </DialogButtons>
                <Section>
                  <SectionHead>
                    <Icon name="hatchYellow" size={15} />
                    Hatch
                    <Collapse>
                      <Icon name="collapse" size={11} />
                    </Collapse>
                  </SectionHead>
                  <SectionBody>
                    <span>PAT file:</span>
                    <FieldRow>
                      <TextField />
                      <Browse>...</Browse>
                    </FieldRow>
                    <span>Pattern:</span>
                    <SelectField>
                      <Drop />
                    </SelectField>
                    <span>Scale:</span>
                    <SpinField>
                      1000.00
                      <SpinArrows>
                        <SpinUp />
                        <SpinDown />
                      </SpinArrows>
                    </SpinField>
                    <span>Rotation:</span>
                    <SpinField>
                      0.00°
                      <SpinArrows>
                        <SpinUp />
                        <SpinDown $off />
                      </SpinArrows>
                    </SpinField>
                    <RedRing />
                  </SectionBody>
                </Section>
              </TaskPanel>
            </Dock>
            <Center>
              <ViewPort>
                <SceneSvg />
              </ViewPort>
              <DocTabs>
                <DocTab>
                  <Icon name="fcad" size={16} />
                  Start page
                  <CloseMark $ml={6}>
                    <Icon name="close" size={12} />
                  </CloseMark>
                </DocTab>
                <DocTab $on>
                  <Icon name="fcad" size={16} />
                  Unnamed : 1*
                  <CloseMark $ml={6}>
                    <Icon name="close" size={12} />
                  </CloseMark>
                </DocTab>
              </DocTabs>
            </Center>
          </Main>
          <StatusBar>
            <StatusText>Valid, Internal name: Box</StatusText>
            <StatusItem $w={20} $ml={4}>
              <Icon name="gridOff" size={16} />
            </StatusItem>
            <StatusItem $w={37} $ml={6} $box>
              <Icon name="lock" size={16} />
              <Drop />
            </StatusItem>
            <StatusItem $w={24} $ml={1} $box>
              <Icon name="wpdim" size={17} />
            </StatusItem>
            <StatusItem $w={16} $ml={12}>
              <Icon name="ortho" size={15} />
            </StatusItem>
            <StatusItem $w={25} $ml={10} $box>
              <Icon name="wp" size={17} />
            </StatusItem>
            <StatusItem $w={80} $ml={19}>
              <Icon name="touchpad" size={14} />
              Touchpad
            </StatusItem>
            <StatusItem $w={8} $ml={5}>
              <Drop $off />
            </StatusItem>
            <StatusItem $w={18} $ml={39}>
              1:1
            </StatusItem>
            <StatusItem $w={8} $ml={26}>
              <Drop />
            </StatusItem>
            <StatusItem $w={150} $ml={11}>
              339.44 mm x 233.20 mm
            </StatusItem>
          </StatusBar>
        </Shell>
        <Spotlight />
      </Window>
    </>
  );
}
